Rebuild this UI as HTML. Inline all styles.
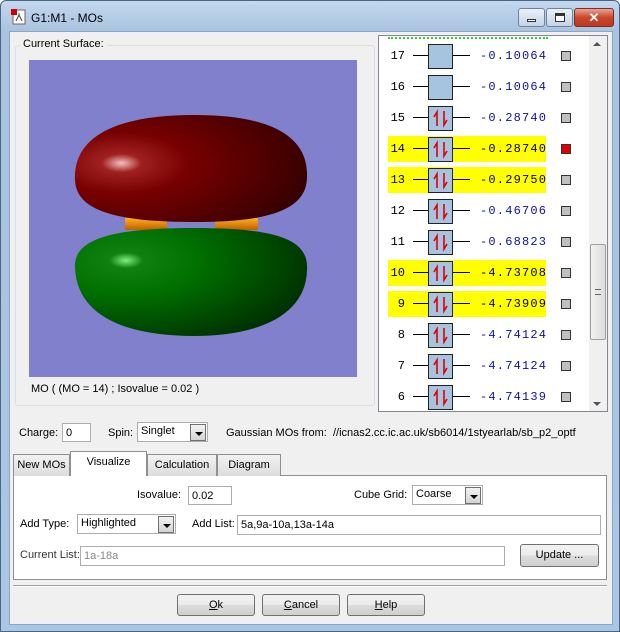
<!DOCTYPE html>
<html><head><style>
*{box-sizing:border-box}
body{margin:0;width:620px;height:632px;overflow:hidden;font-family:"Liberation Sans",sans-serif;font-size:11px;color:#000;background:#fff}
.a{position:absolute}
.win{position:absolute;left:0;top:0;width:620px;height:632px;background:linear-gradient(#c4d8ee,#a9c3e0 30px,#aac6e4);border:1px solid #4b6584;border-radius:6px 6px 0 0}
.cl{position:absolute;left:8px;top:30px;width:604px;height:594px;background:#f0f0f0;border:1px solid #8ea6c3}
.inp{position:absolute;background:#fff;border:1px solid #abadb3;font-size:11px;padding:2px 3px;line-height:15px}
.btn{position:absolute;border:1px solid #707070;border-radius:3px;background:linear-gradient(#f2f2f2,#ebebeb 50%,#dddddd 50%,#cfcfcf);text-align:center;line-height:20px;font-size:11px}
.dd{position:absolute;right:1px;top:1px;width:16px;height:17px;border:1px solid #707070;background:linear-gradient(#f2f2f2,#d4d4d4)}
.dd:after{content:"";position:absolute;left:4px;top:7px;border-left:4px solid transparent;border-right:4px solid transparent;border-top:4px solid #000}
.row{position:absolute;left:388px;width:158px;height:26px}
.num{position:absolute;left:0;width:17px;text-align:right;font-family:"Liberation Mono",monospace;font-size:12px;top:6px}
.en{position:absolute;left:92px;font-family:"Liberation Mono",monospace;font-size:12px;color:#1010a0;top:6px;letter-spacing:1.2px}
.sq{position:absolute;left:173px;top:8px;width:10px;height:10px;border:1px solid #333;background:#c0c0c0}
.hl{background:#ffff00}
.tab{position:absolute;top:454px;height:22px;border:1px solid #8e8f8f;border-bottom:none;background:linear-gradient(#f2f2f2,#dcdcdc);line-height:20px;text-align:center}
</style></head><body>
<div class="win">
<svg class="a" style="left:10px;top:8px" width="16" height="16"><rect x="2" y="1" width="12" height="14" fill="#fff" stroke="#666"/><rect x="0" y="0" width="6" height="6" fill="#d00000"/><path d="M5 12 L8 6 L11 12 M8 6 V4" stroke="#444" fill="none"/></svg>
<div class="a" style="left:30px;top:10px;font-size:12px">G1:M1 - MOs</div>
<div class="a" style="left:517px;top:7px;width:27px;height:19px;border:1px solid #6d829c;border-radius:3px;background:linear-gradient(#eaf1f9,#c3d4e8)"><div class="a" style="left:8px;top:10px;width:9px;height:3px;background:#fff;border:1px solid #333"></div></div>
<div class="a" style="left:545px;top:7px;width:27px;height:19px;border:1px solid #6d829c;border-radius:3px;background:linear-gradient(#eaf1f9,#c3d4e8)"><div class="a" style="left:8px;top:4px;width:10px;height:9px;border:1px solid #333;border-top:3px solid #333;background:#fff"></div></div>
<div class="a" style="left:573px;top:7px;width:40px;height:19px;border:1px solid #7a2f25;border-radius:3px;background:linear-gradient(#e8a594,#c9462c 50%,#c0371e);color:#fff;font-weight:bold;text-align:center;line-height:17px;font-size:13px">✕</div>
<div class="cl"></div>
</div>
<div class="a" style="left:15px;top:45px;width:360px;height:361px;border:1px solid #d5dfe5;border-radius:3px"></div>
<div class="a" style="left:20px;top:38px;background:#f0f0f0;padding:0 3px;font-size:11px">Current Surface:</div>
<svg class="a" style="left:29px;top:60px" width="328" height="317">
<defs>
<radialGradient id="r" cx="0.2" cy="0.45" r="0.95"><stop offset="0" stop-color="#f4c0c0"/><stop offset="0.09" stop-color="#a02020"/><stop offset="0.3" stop-color="#780000"/><stop offset="1" stop-color="#280000"/></radialGradient>
<radialGradient id="g" cx="0.22" cy="0.3" r="0.9"><stop offset="0" stop-color="#80f080"/><stop offset="0.08" stop-color="#108010"/><stop offset="0.35" stop-color="#007000"/><stop offset="1" stop-color="#002800"/></radialGradient>
<linearGradient id="o" x1="0" y1="0" x2="0" y2="1"><stop offset="0" stop-color="#ffb020"/><stop offset="1" stop-color="#c06000"/></linearGradient>
</defs>
<rect width="328" height="317" fill="#8080cc"/>
<rect x="96" y="158" width="42" height="12" fill="url(#o)"/>
<rect x="186" y="158" width="43" height="12" fill="url(#o)"/>
<path d="M46 120 C44 75 90 55 165 55 C240 55 280 75 278 118 C277 150 240 162 165 162 C85 162 47 150 46 120Z" fill="url(#r)"/>
<path d="M46 208 C44 180 80 168 165 168 C250 168 280 180 278 210 C277 255 230 276 165 276 C95 276 48 255 46 208Z" fill="url(#g)"/>
</svg>
<div class="a" style="left:31px;top:383px;font-size:11px">MO ( (MO = 14) ; Isovalue = 0.02 )</div>
<div class="a" style="left:378px;top:35px;width:230px;height:377px;background:#fff;border:1px solid #828790"></div>
<div class="a" style="left:388px;top:37px;width:160px;border-top:2px dotted #33cc33"></div>
<div class="a" style="left:589px;top:36px;width:18px;height:375px;background:#f0f0f0"></div>
<div class="a" style="left:593px;top:42px;border-left:4px solid transparent;border-right:4px solid transparent;border-bottom:4px solid #555"></div>
<div class="a" style="left:593px;top:402px;border-left:4px solid transparent;border-right:4px solid transparent;border-top:4px solid #555"></div>
<div class="a" style="left:590px;top:244px;width:16px;height:96px;border:1px solid #a0a0a0;border-radius:2px;background:linear-gradient(90deg,#f2f2f2,#dcdcdc)"><div class="a" style="left:4px;top:44px;width:6px;height:6px;border-top:1px solid #666;border-bottom:1px solid #666"></div></div>
<div id="rows"></div>
<div class="a" style="left:19px;top:427px">Charge:</div>
<div class="inp" style="left:62px;top:423px;width:29px;height:19px">0</div>
<div class="a" style="left:108px;top:427px">Spin:</div>
<div class="inp" style="left:137px;top:422px;width:71px;height:20px;line-height:13px">Singlet<div class="dd"></div></div>
<div class="a" style="left:226px;top:427px">Gaussian MOs from:&nbsp; //icnas2.cc.ic.ac.uk/sb6014/1styearlab/sb_p2_optf</div>
<div class="a" style="left:13px;top:475px;width:594px;height:105px;background:#fff;border:1px solid #8e8f8f"></div>
<div class="tab" style="left:13px;width:57px">New MOs</div>
<div class="tab" style="left:147px;width:70px">Calculation</div>
<div class="tab" style="left:217px;width:64px">Diagram</div>
<div class="tab" style="left:70px;top:451px;height:25px;width:77px;background:#fff">Visualize</div>
<div class="a" style="left:137px;top:489px">Isovalue:</div>
<div class="inp" style="left:188px;top:486px;width:44px;height:19px">0.02</div>
<div class="a" style="left:354px;top:489px">Cube Grid:</div>
<div class="inp" style="left:412px;top:485px;width:71px;height:20px;line-height:13px">Coarse<div class="dd"></div></div>
<div class="a" style="left:20px;top:518px">Add Type:</div>
<div class="inp" style="left:77px;top:514px;width:99px;height:20px;line-height:13px">Highlighted<div class="dd"></div></div>
<div class="a" style="left:192px;top:518px">Add List:</div>
<div class="inp" style="left:237px;top:515px;width:364px;height:20px">5a,9a-10a,13a-14a</div>
<div class="a" style="left:20px;top:549px;color:#333">Current List:</div>
<div class="inp" style="left:80px;top:546px;width:425px;height:20px;color:#888">1a-18a</div>
<div class="btn" style="left:520px;top:544px;width:79px;height:23px">Update ...</div>
<div class="a" style="left:13px;top:585px;width:594px;border-top:1px solid #a0a0a0;border-bottom:1px solid #fff"></div>
<div class="btn" style="left:177px;top:594px;width:78px;height:22px"><u>O</u>k</div>
<div class="btn" style="left:262px;top:594px;width:78px;height:22px"><u>C</u>ancel</div>
<div class="btn" style="left:347px;top:594px;width:78px;height:22px"><u>H</u>elp</div>
<script>
var d=[[17,"-0.10064",0,0],[16,"-0.10064",0,0],[15,"-0.28740",1,0],[14,"-0.28740",1,2],[13,"-0.29750",1,1],[12,"-0.46706",1,0],[11,"-0.68823",1,0],[10,"-4.73708",1,1],[9,"-4.73909",1,1],[8,"-4.74124",1,0],[7,"-4.74124",1,0],[6,"-4.74139",1,0]];
var h="";d.forEach(function(r,i){var y=56+31*i-13;
var arr=r[2]?'<svg class="a" style="left:0;top:0" width="23" height="23"><path d="M8 19V5L5 10M15 4V18L18 13" stroke="#e00000" stroke-width="1.6" fill="none"/></svg>':'';
h+='<div class="row'+(r[3]?' hl':'')+'" style="top:'+y+'px"><div class="num">'+r[0]+'</div>'+
'<div class="a" style="left:25px;top:12px;width:16px;border-top:1px solid #000"></div>'+
'<div class="a" style="left:64px;top:12px;width:18px;border-top:1px solid #000"></div>'+
'<div class="a" style="left:40px;top:1px;width:25px;height:25px;background:#a6c3e0;border:1px solid #222">'+arr+'</div>'+
'<div class="en" style="color:'+(r[3]?'#000':'#1010a0')+'">'+r[1]+'</div>'+
'<div class="sq" style="'+(r[3]==2?'background:#e00000':'')+'"></div></div>';});
document.getElementById("rows").innerHTML=h;
</script>
</body></html>
